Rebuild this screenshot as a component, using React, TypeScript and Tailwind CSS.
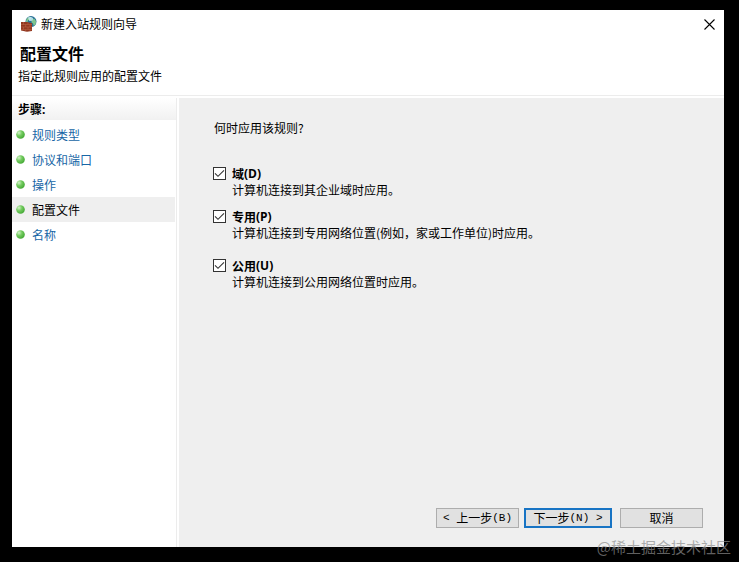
import React, { useState } from 'react';

const steps = ['规则类型', '协议和端口', '操作', '配置文件', '名称'];
const currentStep = '配置文件';

const profiles = [
  { id: 'domain', name: '域', hotkey: '(D)', description: '计算机连接到其企业域时应用。', gap: 'mb-[9px]' },
  { id: 'private', name: '专用', hotkey: '(P)', description: '计算机连接到专用网络位置(例如，家或工作单位)时应用。', gap: 'mb-[15px]' },
  { id: 'public', name: '公用', hotkey: '(U)', description: '计算机连接到公用网络位置时应用。', gap: '' },
];

const FirewallIcon = () => (
  <svg width="16" height="16" viewBox="0 0 16 16" aria-hidden="true">
    <circle cx="10" cy="5.6" r="5.5" fill="#2a7196" />
    <path d="M5.5 3 8 .9l2.2.4-.6 2-2.4.9-.7 1.9-1.5-.2zM11 3l2.4-.3 1.6 2.6-.3 3-1.9 1.8-.8-2.6-1.6-1.2z" fill="#7fc58f" />
    <path d="M7 1.5c1.8-1 4-.5 5.2.8l-.9 2.4-3 .2z" fill="#c8ecf5" opacity=".85" />
    <path d="M0 6h6l5 1.2V15l-5 .8L0 14.5z" fill="#923820" />
    <path d="M0 8.5h11M0 11h11M0 13.4h11M2.5 6v2.5M7 6.5v2M4.7 8.5V11M9 8.5V11M2.5 11v2.4M7 11v2.4M4.7 13.4v2M9 13.4v1.6" stroke="#c06a4c" strokeWidth=".5" fill="none" />
  </svg>
);

const StepBullet = () => (
  <svg width="9" height="9" viewBox="0 0 9 9" className="shrink-0" aria-hidden="true">
    <defs>
      <radialGradient id="bullet" cx="32%" cy="30%" r="75%">
        <stop offset="0" stopColor="#d4f2ca" />
        <stop offset=".45" stopColor="#74cc60" />
        <stop offset="1" stopColor="#43a834" />
      </radialGradient>
    </defs>
    <circle cx="4.5" cy="4.5" r="4.3" fill="url(#bullet)" />
  </svg>
);

interface ProfileOptionProps {
  id: string;
  name: string;
  hotkey: string;
  description: string;
  gap: string;
}

const ProfileOption: React.FC<ProfileOptionProps> = ({ id, name, hotkey, description, gap }) => {
  const [checked, setChecked] = useState(true);

  return (
    <div className={`flex items-start gap-[6px] ${gap}`}>
      <span className="grid w-[13px] h-[13px] mt-[2px] shrink-0">
        <input
          id={id}
          type="checkbox"
          checked={checked}
          onChange={(e) => setChecked(e.target.checked)}
          className="col-start-1 row-start-1 appearance-none w-[13px] h-[13px] bg-white border border-[#333333]"
        />
        {checked && (
          <svg viewBox="0 0 13 13" className="col-start-1 row-start-1 w-[13px] h-[13px] pointer-events-none" aria-hidden="true">
            <path d="M2 6.3 5 9.3 11 3.3" fill="none" stroke="#333333" strokeWidth="1.1" />
          </svg>
        )}
      </span>
      <div>
        <label htmlFor={id} className="flex items-center font-bold leading-[17px]">
          {name}
          <span className="font-['Open_Sans','Noto_Sans',sans-serif]">{hotkey}</span>
        </label>
        <p className="leading-4">{description}</p>
      </div>
    </div>
  );
};

export default function App() {
  return (
    <div className="relative min-h-screen flex bg-black pl-3 pr-[15px] pt-[10px] pb-[15px] text-xs text-black font-['Noto_Sans_CJK_SC',sans-serif]">
      <div className="flex-1 flex flex-col bg-white">
        {/* Title bar */}
        <div className="flex items-center justify-between h-7 pl-[9px] pr-2">
          <div className="flex items-center gap-1">
            <FirewallIcon />
            <span>新建入站规则向导</span>
          </div>
          <button aria-label="关闭" className="p-px">
            <svg width="11" height="11" viewBox="0 0 11 11" aria-hidden="true">
              <path d="M.5.5l10 10M10.5.5l-10 10" stroke="#000000" strokeWidth="1.1" />
            </svg>
          </button>
        </div>

        {/* Page heading */}
        <header className="h-[58px] pt-1 border-b border-[#ececec]">
          <h1 className="pl-2 text-base leading-[22px] font-bold">配置文件</h1>
          <p className="pl-[6px] pt-[3px] leading-[18px]">指定此规则应用的配置文件</p>
        </header>

        <div className="flex-1 flex pt-[2px]">
          {/* Steps */}
          <nav className="w-[165px] shrink-0 border-r border-[#ececec]">
            <h2 className="h-[22px] mb-[2px] pl-[6px] leading-[22px] font-bold bg-linear-to-b from-white to-[#f1f1f1]">
              步骤<span className="font-['Noto_Sans',sans-serif]">:</span>
            </h2>
            <ul className="pr-px">
              {steps.map((step) => (
                <li
                  key={step}
                  className={`flex items-center gap-[7px] h-[25px] pl-1 ${step === currentStep ? 'bg-[#efefef]' : ''}`}
                >
                  <StepBullet />
                  {step === currentStep ? (
                    <span aria-current="step">{step}</span>
                  ) : (
                    <a href="#" className="text-[#1766a6]">{step}</a>
                  )}
                </li>
              ))}
            </ul>
          </nav>

          {/* Profile options */}
          <main className="flex-1 flex flex-col ml-[2px] pt-[21px] pl-[34px] pr-[21px] pb-[19px] bg-[#efefef]">
            <p className="pl-px leading-[18px] mb-7">何时应用该规则?</p>
            <div className="flex-1 flex flex-col gap-px">
              {profiles.map((profile) => (
                <ProfileOption key={profile.id} {...profile} />
              ))}
            </div>

            <div className="flex justify-end">
              <button className="flex items-center justify-center w-[83px] h-5 mr-[5px] bg-[#e1e1e1] border border-[#adadad] whitespace-pre">
                <span className="font-['Liberation_Mono',monospace] text-[11px]">&lt; </span>
                上一步
                <span className="font-['Liberation_Mono',monospace] text-[11px]">(B)</span>
              </button>
              <button className="flex items-center justify-center w-[88px] h-5 mr-2 bg-[#e1e1e1] border-2 border-[#1874c4] whitespace-pre">
                下一步
                <span className="font-['Liberation_Mono',monospace] text-[11px]">(N) &gt;</span>
              </button>
              <button className="flex items-center justify-center w-[83px] h-5 bg-[#e1e1e1] border border-[#adadad]">
                取消
              </button>
            </div>
          </main>
        </div>
      </div>

      {/* Watermark */}
      <span className="absolute right-2 bottom-1 text-[15px] leading-[22px] text-[#8c8c8c]/70">@稀土掘金技术社区</span>
    </div>
  );
}
